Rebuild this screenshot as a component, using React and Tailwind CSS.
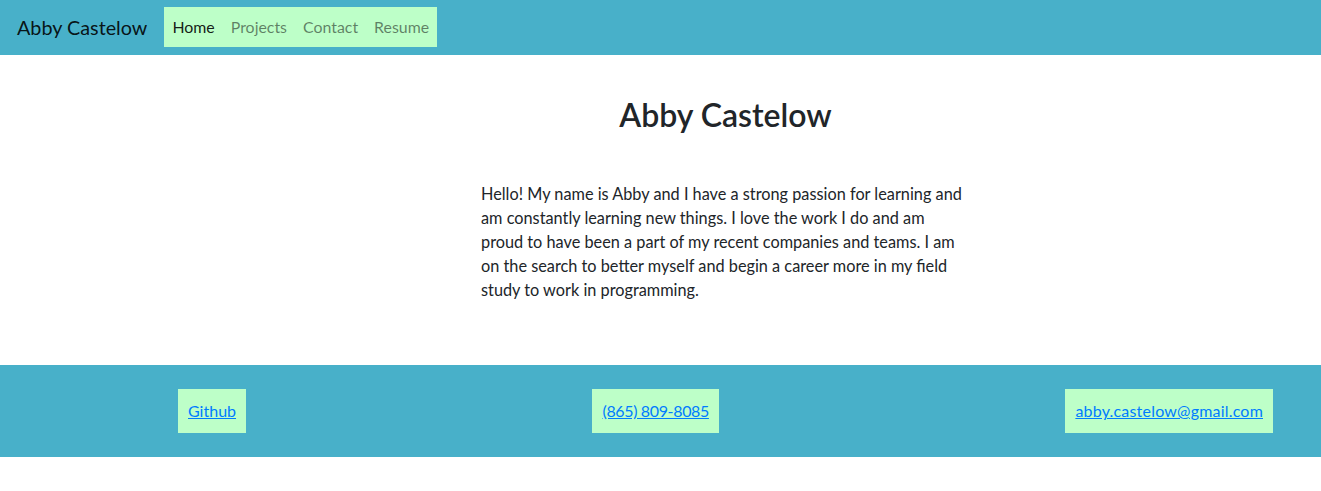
const links = ['Home', 'Projects', 'Contact', 'Resume'];

const contacts = [
  { label: 'Github', href: '#', extra: '' },
  { label: '(865) 809-8085', href: '#', extra: 'tracking-[-0.35px]' },
  { label: 'abby.castelow@gmail.com', href: '#', extra: 'tracking-[0.2px]' },
];

export default function App() {
  return (
    <div className="min-h-[491px] bg-white font-['Lato',sans-serif] text-[#212529]">
      <nav className="flex h-[55px] items-start bg-[#48b0c9] px-4 pt-[7px]">
        <a href="#" className="mr-[17px] pl-[1px] pt-[5px] text-[19.8px] leading-[30px] text-black/90">
          Abby Castelow
        </a>
        <ul className="flex bg-[#bdffc8]">
          {links.map((link, i) => (
            <li key={link}>
              <a
                href="#"
                className={`block px-2 py-2 text-[15.9px] leading-6 ${i === 0 ? 'text-black/90' : 'text-black/50'}`}
              >
                {link}
              </a>
            </li>
          ))}
        </ul>
      </nav>

      <main className="flex h-[310px] pl-[466px]">
        <div className="w-[519px] px-[15px]">
          <h2 className="mt-[41px] text-center text-[32px] font-semibold leading-[38px] text-[#212529]">
            Abby Castelow
          </h2>
          <p className="mt-[48px] text-[16.3px] leading-6">
            Hello! My name is Abby and I have a strong passion for learning and
            <br />
            am constantly learning new things. I love the work I do and am
            <br />
            proud to have been a part of my recent companies and teams. I am
            <br />
            on the search to better myself and begin a career more in my field
            <br />
            study to work in programming.
          </p>
        </div>
      </main>

      <footer className="flex h-[92px] items-center justify-between bg-[#48b0c9] pl-[178px] pr-[48px]">
        {contacts.map((c) => (
          <a
            key={c.label}
            href={c.href}
            className={`block bg-[#bdffc8] px-[10px] py-[10px] text-[16px] leading-6 text-[#007bff] underline ${c.extra}`}
          >
            {c.label}
          </a>
        ))}
      </footer>
    </div>
  );
}
